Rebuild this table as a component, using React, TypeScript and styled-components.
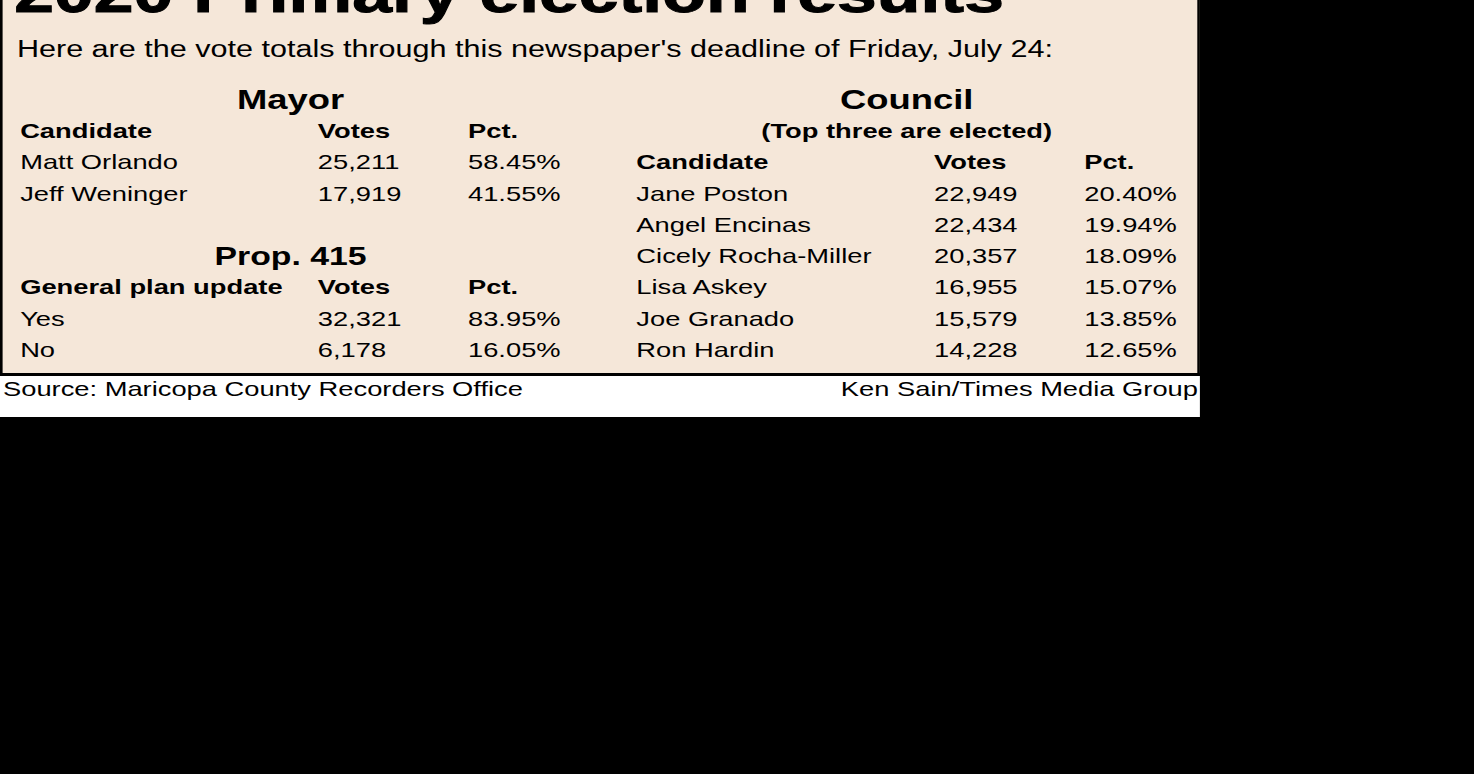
import React from "react";
import styled, { createGlobalStyle } from "styled-components";

const GlobalStyle = createGlobalStyle`
    html, body {
        margin: 0;
        padding: 0;
        background: #000;
    }
    body {
        font-family: "Liberation Sans", Arial, Helvetica, sans-serif;
        color: #000;
        overflow: hidden;
    }
`;

// the newspaper graphic is printed stretched sideways, so lay it out narrow and widen it
const Graphic = styled.div`
    width: 923px;
    margin-top: -34px;
    transform: scaleX(1.3);
    transform-origin: 0 0;
`;

const Panel = styled.div`
    background: #f5e7d9;
    border-left: 2.3px solid #000;
    border-right: 2.3px solid #000;
    border-bottom: 3px solid #000;
    padding: 0 0 7px 9px;
`;

const Title = styled.h1`
    margin: 0;
    font-size: 55px;
    line-height: 54px;
    font-weight: 700;
    -webkit-text-stroke: 1px #000;
    white-space: nowrap;
`;

const Intro = styled.p`
    margin: 14px 0 0 2px;
    font-size: 23.5px;
    line-height: 30px;
    white-space: nowrap;
`;

const Results = styled.div`
    display: flex;
    gap: 58px;
    margin: 20px 0 0 4.5px;
`;

const Table = styled.div`
    display: grid;
    grid-template-columns: 229px 115.5px 71.5px;
    grid-auto-rows: 31.3px;
    align-items: center;
    font-size: 21px;
    white-space: nowrap;
`;

const SectionTitle = styled.div<{ $size?: number }>`
    grid-column: 1 / -1;
    text-align: center;
    font-weight: 700;
    font-size: ${({ $size }) => $size ?? 28}px;
`;

const Note = styled.div`
    grid-column: 1 / -1;
    text-align: center;
    font-weight: 700;
    font-size: 21px;
`;

const HeadCell = styled.div`
    font-weight: 700;
`;

const Cell = styled.div``;

const Spacer = styled.div`
    grid-column: 1 / -1;
`;

const Credits = styled.div`
    display: flex;
    justify-content: space-between;
    background: #fff;
    height: 41px;
    padding: 0 1.5px 0 2.3px;
    font-size: 21px;
    line-height: 26px;
    white-space: nowrap;
`;

type Row = [string, string, string];

const mayor: Row[] = [
    ["Matt Orlando", "25,211", "58.45%"],
    ["Jeff Weninger", "17,919", "41.55%"],
];

const prop: Row[] = [
    ["Yes", "32,321", "83.95%"],
    ["No", "6,178", "16.05%"],
];

const council: Row[] = [
    ["Jane Poston", "22,949", "20.40%"],
    ["Angel Encinas", "22,434", "19.94%"],
    ["Cicely Rocha-Miller", "20,357", "18.09%"],
    ["Lisa Askey", "16,955", "15.07%"],
    ["Joe Granado", "15,579", "13.85%"],
    ["Ron Hardin", "14,228", "12.65%"],
];

const Header = ({ label }: { label: string }) => (
    <>
        <HeadCell>{label}</HeadCell>
        <HeadCell>Votes</HeadCell>
        <HeadCell>Pct.</HeadCell>
    </>
);

const Rows = ({ rows }: { rows: Row[] }) => (
    <>
        {rows.map(([name, votes, pct]) => (
            <React.Fragment key={name}>
                <Cell>{name}</Cell>
                <Cell>{votes}</Cell>
                <Cell>{pct}</Cell>
            </React.Fragment>
        ))}
    </>
);

const App: React.FC = () => (
    <>
        <GlobalStyle />
        <Graphic>
            <Panel>
                <Title>2020 Primary election results</Title>
                <Intro>
                    Here are the vote totals through this newspaper's deadline of Friday, July 24:
                </Intro>
                <Results>
                    <Table>
                        <SectionTitle>Mayor</SectionTitle>
                        <Header label="Candidate" />
                        <Rows rows={mayor} />
                        <Spacer />
                        <SectionTitle $size={26}>Prop. 415</SectionTitle>
                        <Header label="General plan update" />
                        <Rows rows={prop} />
                    </Table>
                    <Table>
                        <SectionTitle>Council</SectionTitle>
                        <Note>(Top three are elected)</Note>
                        <Header label="Candidate" />
                        <Rows rows={council} />
                    </Table>
                </Results>
            </Panel>
            <Credits>
                <span>Source: Maricopa County Recorders Office</span>
                <span>Ken Sain/Times Media Group</span>
            </Credits>
        </Graphic>
    </>
);

export default App;
